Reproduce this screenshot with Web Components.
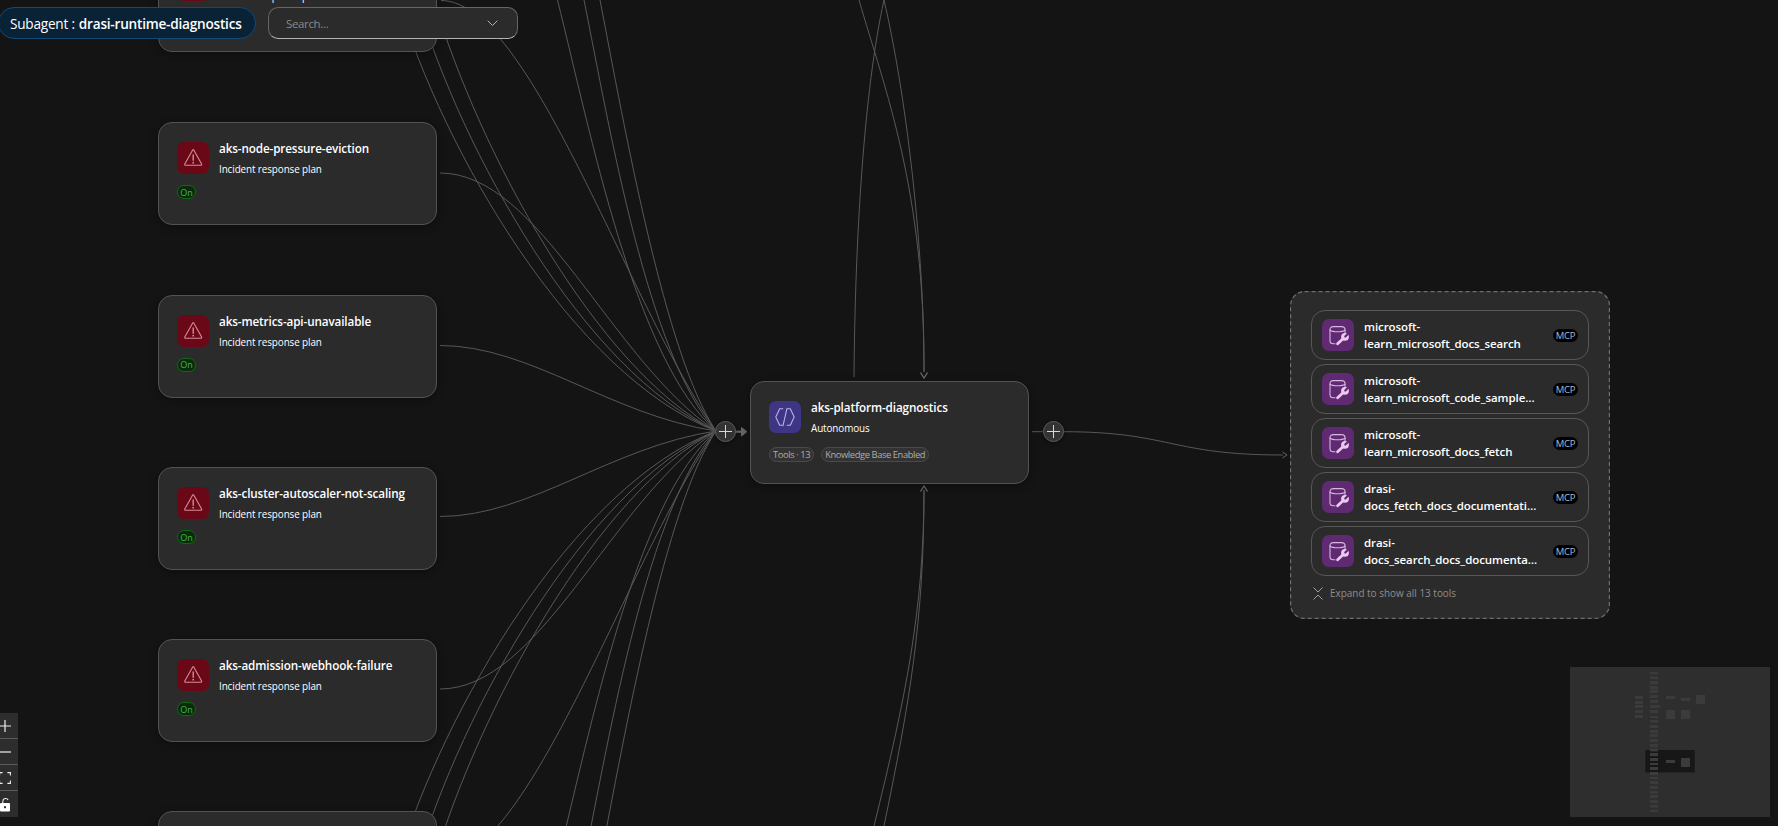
<!DOCTYPE html>
<html lang="en">
<head>
<meta charset="utf-8">
<title>Agent canvas</title>
<style>
  html, body { margin: 0; height: 100%; background: #141414; overflow: hidden; }
  body { font-family: "Open Sans", "Noto Sans", sans-serif; color: #fff; }
  flow-canvas { width: 100vw; height: 100vh; }
</style>
</head>
<body>
<flow-canvas>
  <edge-layer></edge-layer>

  <agent-node style="left:158px;top:-51px" kind="incident" state="on" name="aks-pod-restart-loop" desc="Incident response plan"></agent-node>
  <agent-node style="left:158px;top:122px" kind="incident" state="on" name="aks-node-pressure-eviction" desc="Incident response plan"></agent-node>
  <agent-node style="left:158px;top:294.5px" kind="incident" state="on" name="aks-metrics-api-unavailable" desc="Incident response plan"></agent-node>
  <agent-node style="left:158px;top:467px" kind="incident" state="on" name="aks-cluster-autoscaler-not-scaling" desc="Incident response plan"></agent-node>
  <agent-node style="left:158px;top:639px" kind="incident" state="on" name="aks-admission-webhook-failure" desc="Incident response plan"></agent-node>
  <agent-node style="left:158px;top:811px" kind="incident" name="aks-dns-resolution-failure" desc="Incident response plan"></agent-node>

  <agent-node style="left:750px;top:381px" kind="agent" name="aks-platform-diagnostics" desc="Autonomous">
    <meta-tag>Tools · 13</meta-tag>
    <meta-tag>Knowledge Base Enabled</meta-tag>
  </agent-node>

  <add-handle style="left:715px;top:421px"></add-handle>
  <add-handle style="left:1042.5px;top:421px"></add-handle>

  <tool-group style="left:1290px;top:291px" more="Expand to show all 13 tools">
    <tool-row>microsoft-learn_microsoft_docs_search</tool-row>
    <tool-row>microsoft-learn_microsoft_code_sample_search</tool-row>
    <tool-row>microsoft-learn_microsoft_docs_fetch</tool-row>
    <tool-row>drasi-docs_fetch_docs_documentation</tool-row>
    <tool-row>drasi-docs_search_docs_documentation</tool-row>
  </tool-group>

  <subagent-bar name="drasi-runtime-diagnostics"></subagent-bar>
  <zoom-controls></zoom-controls>
  <mini-map></mini-map>
</flow-canvas>

<script>
// icons used by the nodes
const ICONS = {
  incident: `<svg viewBox="0 0 32 32" width="32" height="32" fill="none" stroke="#d68a97" stroke-width="1.1" stroke-linejoin="round">
      <path d="M15.800 7.800 7.800 22a.9.9 0 0 0 .8 1.300h15.200a.9.9 0 0 0 .8-1.300L16.600 7.800a.5.5 0 0 0-.8 0z"/>
      <path d="M16.200 13v5.200" stroke-width="1.400" stroke-linecap="round"/>
      <circle cx="16.200" cy="20.700" r=".9" fill="#d68a97" stroke="none"/></svg>`,
  agent: `<svg viewBox="0 0 32 32" width="32" height="32" fill="none" stroke="#b9b2e6" stroke-width="1.1" stroke-linejoin="round" stroke-linecap="round">
      <path d="M13.800 7.800h-3.100L6.800 16l3.900 8.200h2.600"/>
      <path d="M18.700 7.800h2.600L25.200 16l-3.900 8.200h-3.100"/>
      <path d="M18 7.400 14 24.600"/></svg>`,
  tool: `<svg viewBox="0 0 32 32" width="32" height="32" fill="none" stroke="#d9b6de" stroke-width="1.100" stroke-linecap="round" stroke-linejoin="round">
      <path d="M13 24.800h-1.800C9.200 24.800 8 23.600 8 21.800V10.600C8 8.800 9.400 7.600 11.200 7.600h8.400c2 0 3.400 1.200 3.400 3V14"/>
      <path d="M8 11.200c1.600 1.200 4.400 1.600 7.500 1.600s5.900-.4 7.500-1.600"/>
      <path d="M15.600 24.700 21 19.800" stroke="#ecc9ee" stroke-width="2.800"/>
      <circle cx="23" cy="17.800" r="3.900" fill="#ecc9ee" stroke="none"/>
      <path d="M23.300 17.500 27 13.800" stroke="#5f2a72" stroke-width="2.200"/></svg>`
};

class FlowCanvas extends HTMLElement {
  constructor() {
    super();
    this.attachShadow({ mode: 'open' }).innerHTML = `
      <style>
        :host { display: block; position: relative; overflow: hidden; background: #141414; }
        ::slotted(*) { position: absolute; }
      </style>
      <slot></slot>`;
  }
}

// all the connection lines, the nodes sit on top of them
class EdgeLayer extends HTMLElement {
  constructor() {
    super();
    // start x, start y, then both control points, all end on the left handle
    const upper = [
      [441, 0.5, 530, 0.5, 628, 305],
      [440, 173, 540, 173, 610, 360],
      [440, 345.5, 530, 345.5, 610, 415],
      [398, 0, 443, 150, 572, 375],
      [417, 0, 461, 150, 584, 372],
      [434, 0, 478, 150, 597, 370],
      [557.5, 0, 590, 130, 635, 360],
      [584, 0, 610, 130, 648, 355],
      [600, 0, 625, 130, 665, 355]
    ];
    const toHandle = ([a, b, c, d, e, f]) => `M${a} ${b}C${c} ${d} ${e} ${f} 716 431`;
    const mirror = ([a, b, c, d, e, f]) => [a, 862 - b, c, 862 - d, e, 862 - f];
    const paths = [
      ...upper.map(toHandle),
      ...upper.map(mirror).map(toHandle),
      'M859 0C885 90 925 190 924 372',
      'M884 0C905 90 924 240 924 372',
      'M854 377C855 240 864 90 884 0',
      'M874 826C905 700 924 610 924 490',
      'M884 826C910 700 924 620 924 490',
      'M1032 431.7H1043',
      'M1063 431.7C1170 431.7 1170 455 1283 455'
    ];
    this.attachShadow({ mode: 'open' }).innerHTML = `
      <style>
        :host { display: block; inset: 0; pointer-events: none; }
        svg { display: block; width: 100%; height: 100%; }
        path { fill: none; stroke: #585858; stroke-width: 1; }
      </style>
      <svg viewBox="0 0 1778 826" preserveAspectRatio="xMinYMin slice">
        ${paths.map(d => `<path d="${d}"/>`).join('')}
        <path d="M735 431.7H743" style="stroke-width:2.2;stroke:#666"/>
        <path d="M741.5 427.5 746.8 431.7 741.5 436z" style="fill:#666;stroke:#666"/>
        <path d="M920.5 372.5 924 378 927.5 372.5" style="stroke-width:1.3;stroke:#6a6a6a"/>
        <path d="M920.5 491.5 924 486 927.5 491.5" style="stroke-width:1.3;stroke:#6a6a6a"/>
        <path d="M1282.5 452 1287 455 1282.5 458" style="stroke:#666"/>
      </svg>`;
  }
}

class AddHandle extends HTMLElement {
  constructor() {
    super();
    this.attachShadow({ mode: 'open' }).innerHTML = `
      <style>
        :host { display: flex; width: 21px; height: 21px; box-sizing: border-box; align-items: center; justify-content: center;
                border: 1px solid #5e5e5e; border-radius: 50%; background: #333; box-shadow: 0 1px 4px rgba(0,0,0,.5); }
        svg { display: block; }
      </style>
      <svg width="13" height="13" viewBox="0 0 13 13" stroke="#d6d6d6" stroke-width="1"><path d="M6.5 0v13M0 6.5h13"/></svg>`;
  }
}

class MetaTag extends HTMLElement {
  constructor() {
    super();
    this.attachShadow({ mode: 'open' }).innerHTML = `
      <style>
        :host { display: inline-flex; align-items: center; height: 15px; box-sizing: border-box; padding: 0 3px;
                border: 1px solid #4a4a4a; border-radius: 8px; background: #333; color: #adadad;
                font-size: 9.4px; white-space: nowrap; letter-spacing: -.42px; }
      </style>
      <slot></slot>`;
  }
}

class AgentNode extends HTMLElement {
  constructor() {
    super();
    const kind = this.getAttribute('kind');
    const on = this.getAttribute('state') === 'on';
    this.attachShadow({ mode: 'open' }).innerHTML = `
      <style>
        :host { display: block; width: 279px; height: 103px; box-sizing: border-box; padding: 19px 18px 0;
                background: #2b2b2b; border: 1px solid #535353; border-radius: 14px;
                box-shadow: 0 2px 8px rgba(0,0,0,.35); }
        .top { display: flex; gap: 10px; }
        .icon { flex: none; width: 32px; height: 32px; border-radius: 7px; }
        .incident { background: #6b0818; }
        .agent { background: #3f3585; }
        .name { font-size: 11.7px; font-weight: 600; line-height: 15px; color: #fff; margin-top: -1px; white-space: nowrap; letter-spacing: -.12px; }
        .desc { font-size: 9.9px; line-height: 13px; margin-top: 7px; color: #fff; white-space: nowrap; letter-spacing: -.1px; }
        .on { display: inline-flex; align-items: center; justify-content: center; box-sizing: border-box; width: 19px; height: 14px; margin-top: 9px;
              border: 1px solid #0e6a12; border-radius: 8px; background: #082c0b; color: #4caf50; font-size: 9px; }
        .tags { display: flex; gap: 7px; margin-top: 12px; }
        .tags:empty { display: none; }
      </style>
      <div class="top">
        <div class="icon ${kind}">${ICONS[kind]}</div>
        <div>
          <div class="name">${this.getAttribute('name')}</div>
          <div class="desc">${this.getAttribute('desc')}</div>
        </div>
      </div>
      ${on ? '<div class="on">On</div>' : ''}
      ${kind === 'agent' ? '<div class="tags"><slot></slot></div>' : ''}`;
  }
}

class ToolRow extends HTMLElement {
  constructor() {
    super();
    this.attachShadow({ mode: 'open' }).innerHTML = `
      <style>
        :host { display: flex; align-items: center; gap: 10px; height: 50px; box-sizing: border-box; padding: 0 10px;
                border: 1px solid #575757; border-radius: 14px; }
        .icon { flex: none; width: 32px; height: 32px; border-radius: 7px; background: #5f2a72; }
        .label { flex: 1; min-width: 0; font-size: 11.5px; font-weight: 600; line-height: 17px; color: #fff; letter-spacing: -.08px;
                 display: -webkit-box; -webkit-box-orient: vertical; -webkit-line-clamp: 2; overflow: hidden; overflow-wrap: anywhere; }
        .mcp { flex: none; display: flex; align-items: center; justify-content: center; width: 25px; height: 13px; border-radius: 7px;
               background: #000; color: #a9bbd0; font-size: 9.5px; letter-spacing: -.3px; margin-left: 4px; }
      </style>
      <div class="icon">${ICONS.tool}</div>
      <div class="label"><slot></slot></div>
      <div class="mcp">MCP</div>`;
  }
}

class ToolGroup extends HTMLElement {
  constructor() {
    super();
    this.attachShadow({ mode: 'open' }).innerHTML = `
      <style>
        :host { display: block; width: 320px; height: 328px; box-sizing: border-box; padding: 19px 21px 0;
                background: #2b2b2b; border-radius: 14px; }
        .rows { display: flex; flex-direction: column; gap: 4px; }
        .more { display: flex; align-items: center; gap: 7px; height: 34px; padding-left: 2px; color: #8e8e8e; font-size: 9.95px; }
        svg { display: block; }
        .edge { position: absolute; inset: 0; pointer-events: none; }
      </style>
      <svg class="edge" width="320" height="328" fill="none"><rect x=".6" y=".6" width="318.800" height="326.800" rx="14" stroke="#6e6e6e" stroke-width="1.200" stroke-dasharray="4 3"/></svg>
      <div class="rows"><slot></slot></div>
      <div class="more">
        <svg width="10" height="13" viewBox="0 0 10 13" fill="none" stroke="#a0a0a0" stroke-width="1"><path d="M.5.5 5 5 9.500.5M.5 12.500 5 8l4.500 4.500"/></svg>
        ${this.getAttribute('more')}
      </div>`;
  }
}

class SubagentBar extends HTMLElement {
  constructor() {
    super();
    this.attachShadow({ mode: 'open' }).innerHTML = `
      <style>
        :host { display: flex; gap: 12px; left: -2px; top: 7px; font-size: 13.6px; }
        .pill { display: flex; align-items: center; width: 258px; height: 32px; box-sizing: border-box; padding-left: 11px;
                border: 1px solid #104a78; border-radius: 16px; background: #0a2236; color: #fff; white-space: nowrap; letter-spacing: -.22px; }
        b { font-weight: 600; margin-left: .3em; }
        .search { display: flex; align-items: center; justify-content: space-between; width: 250px; height: 32px; box-sizing: border-box;
                  padding: 0 19px 0 17px; border: 1px solid #666; border-bottom-color: #b4b4b4; border-radius: 10px; background: #2b2b2b;
                  color: #8a8a8a; font-size: 11.5px; letter-spacing: -.35px; }
      </style>
      <div class="pill">Subagent : <b>${this.getAttribute('name')}</b></div>
      <div class="search">Search...
        <svg width="11" height="7" viewBox="0 0 11 7" fill="none" stroke="#b4b4b4" stroke-width="1"><path d="M.7.7 5.500 5.500 10.300.7"/></svg>
      </div>`;
  }
}

class ZoomControls extends HTMLElement {
  constructor() {
    super();
    this.attachShadow({ mode: 'open' }).innerHTML = `
      <style>
        :host { display: flex; flex-direction: column; left: -8px; top: 713px; width: 26px; background: #2d2d2d; }
        div { display: flex; align-items: center; justify-content: center; height: 26px; box-sizing: border-box; border-bottom: 1px solid #5a5a5a; }
        div:last-child { border-bottom: 0; }
        svg { display: block; }
      </style>
      <div><svg width="12" height="12" viewBox="0 0 12 12" stroke="#eee" stroke-width="1.2"><path d="M6 0v12M0 6h12"/></svg></div>
      <div><svg width="12" height="12" viewBox="0 0 12 12" stroke="#eee" stroke-width="1.2"><path d="M0 6h12"/></svg></div>
      <div><svg width="12" height="12" viewBox="0 0 12 12" fill="none" stroke="#eee" stroke-width="1.100"><path d="M.6 3.500V.6h3M8.400.6h3v2.900M11.400 8.500v2.900h-3M3.600 11.400h-3V8.500"/></svg></div>
      <div><svg width="12" height="15" viewBox="0 0 12 15"><path d="M2 6.500V4.200A2.800 2.800 0 0 1 7.300 3" transform="translate(1.800 0)" fill="none" stroke="#eee" stroke-width="1.100"/><rect x="1" y="6" width="10" height="8.500" rx="1" fill="#fff"/><rect x="5" y="9.200" width="2" height="2" fill="#2d2d2d"/></svg></div>`;
  }
}

class MiniMap extends HTMLElement {
  constructor() {
    super();
    // y and height of the long column of nodes in the overview
    const spine = [[5,2.300],[9.300,2.700],[14,3.300],[19,3.300],[23,3],[28,3],[33,3],[38,3,1],[43,3],[49,2],[53,2.700],[58,3],[63,3],[67,3],[72,3],[77,3],[81.700,2.700],[86,3],[91,3],[96,2],[100,3],[105,3],[110,2],[114,3],[119,3],[124,2.700],[128,3],[133,3],[138,2.700],[143,2]];
    const rect = (x, y, w, h, c) => `<rect x="${x}" y="${y}" width="${w}" height="${h}" fill="${c || '#3b3b3b'}"/>`;
    const parts = [
      rect(75.300, 83, 49.400, 22.400, '#171717'),
      ...spine.map(([y, h, wide]) => rect(80, y, wide ? 10 : 8, h)),
      ...[29, 34, 38, 43, 48].map(y => rect(65, y, 8, 3)),
      rect(96, 29, 9, 3), rect(111, 31, 9, 3), rect(126, 28, 9, 9),
      rect(96, 43, 9, 9), rect(111, 43, 9, 9),
      rect(96, 93, 9, 3), rect(111, 91, 9, 9)
    ];
    this.attachShadow({ mode: 'open' }).innerHTML = `
      <style>
        :host { display: block; left: 1570px; top: 667px; width: 200px; height: 150px; background: #2e2e2e; }
        svg { display: block; }
      </style>
      <svg width="200" height="150" viewBox="0 0 200 150">${parts.join('')}</svg>`;
  }
}

customElements.define('flow-canvas', FlowCanvas);
customElements.define('edge-layer', EdgeLayer);
customElements.define('add-handle', AddHandle);
customElements.define('meta-tag', MetaTag);
customElements.define('agent-node', AgentNode);
customElements.define('tool-row', ToolRow);
customElements.define('tool-group', ToolGroup);
customElements.define('subagent-bar', SubagentBar);
customElements.define('zoom-controls', ZoomControls);
customElements.define('mini-map', MiniMap);
</script>
</body>
</html>
